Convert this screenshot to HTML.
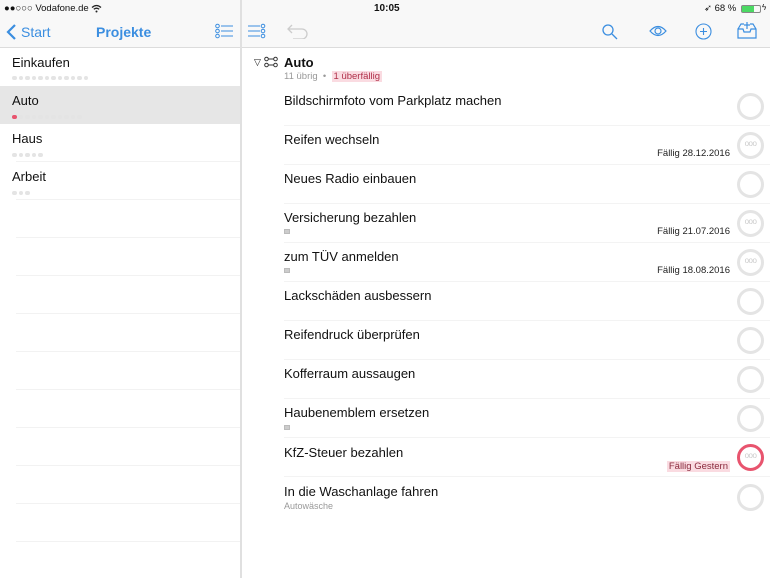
<!DOCTYPE html><html><head><meta charset="utf-8"><style>
*{margin:0;padding:0;box-sizing:border-box}
body{width:770px;height:578px;overflow:hidden;background:#fff;font-family:"Liberation Sans",sans-serif;position:relative;color:#111}
.a{position:absolute}
.top{left:0;top:0;width:770px;height:48px;background:#f8f8f8;border-bottom:1px solid #dcdcdc}
.blue{color:#3b8ee0}
.dots span{display:inline-block;width:4.5px;height:4.5px;border-radius:50%;background:#e4e4e4;margin-right:2px}
.sl{left:16px;width:224px;height:1px;background:#f2f2f2}
.t{left:284px;font-size:13px;color:#111}
.rl{left:284px;width:486px;height:1px;background:#f3f3f3}
.c{left:737px;width:27px;height:27px;border-radius:50%;border:3px solid #e4e4e4}
.c.d::after{content:"ooo";position:absolute;left:0;width:21px;text-align:center;top:5px;font-size:8px;line-height:8px;color:#ccc;letter-spacing:-.5px}
.due{right:40px;font-size:9.5px;color:#222}
.note{left:284px;width:6px;height:5px;background:#ccc;border:1px solid #bbb}
</style></head><body>
<div class="a top"></div>
<div class="a" style="left:4px;top:3px;font-size:9.5px">●●○○○ Vodafone.de</div>
<svg class="a" style="left:91px;top:4px" width="11" height="9" stroke="#222" fill="none" stroke-width="1.3"><path d="M1 3.5Q5.5 -0.5 10 3.5M2.8 5.3Q5.5 3 8.2 5.3"/><circle cx="5.5" cy="7.5" r="1" fill="#222" stroke="none"/></svg>
<div class="a" style="left:374px;top:3px;font-size:10px;font-weight:bold">10:05</div>
<div class="a" style="left:704px;top:3px;font-size:9.5px">➶ 68 %</div>
<div class="a" style="left:741px;top:5px;width:20px;height:8px;border:1px solid #888;border-radius:2px"><div style="width:12px;height:6px;background:#4cd964"></div></div>
<div class="a" style="left:762px;top:3px;font-size:8px">ϟ</div>
<svg class="a" style="left:6px;top:24px" width="12" height="16"><path d="M9 1L2 8l7 7" stroke="#3b8ee0" stroke-width="2.2" fill="none"/></svg>
<div class="a blue" style="left:21px;top:24px;font-size:14px">Start</div>
<div class="a blue" style="left:96px;top:24px;font-size:14px;font-weight:bold">Projekte</div>
<svg class="a" style="left:215px;top:23px" width="18" height="16" stroke="#3b8ee0" fill="none" stroke-width="1"><circle cx="2.5" cy="3" r="1.8"/><circle cx="2.5" cy="8" r="1.8"/><circle cx="2.5" cy="13" r="1.8"/><path d="M6 3h12M6 8h12M6 13h12"/></svg>
<div class="a" style="left:240px;top:0;width:2px;height:578px;background:#e0e0e0"></div>
<svg class="a" style="left:248px;top:23px" width="18" height="16" stroke="#3b8ee0" fill="none" stroke-width="1"><circle cx="15" cy="3" r="1.8"/><circle cx="15" cy="8" r="1.8"/><circle cx="15" cy="13" r="1.8"/><path d="M0 3h12M0 8h12M0 13h12"/></svg>
<svg class="a" style="left:287px;top:23px" width="22" height="16" stroke="#ccc" fill="none" stroke-width="1.3"><path d="M5 2L1 6l4 4M1 6h14a5 5 0 0 1 0 10H6"/></svg>
<svg class="a" style="left:602px;top:24px" width="16" height="16" stroke="#3b8ee0" fill="none" stroke-width="1.3"><circle cx="6" cy="6" r="5"/><path d="M10 10l5 5"/></svg>
<svg class="a" style="left:649px;top:25px" width="18" height="12" stroke="#3b8ee0" fill="none" stroke-width="1.2"><path d="M1 6Q9 -3 17 6Q9 15 1 6z"/><circle cx="9" cy="6" r="3"/></svg>
<svg class="a" style="left:695px;top:23px" width="17" height="17" stroke="#3b8ee0" fill="none" stroke-width="1.1"><circle cx="8.5" cy="8.5" r="7.5"/><path d="M8.5 5v7M5 8.5h7"/></svg>
<svg class="a" style="left:737px;top:21px" width="20" height="18" stroke="#3b8ee0" fill="none" stroke-width="1.2"><path d="M1 8l3-5h3M13 3h3l3 5v9H1V8h5l1 3h6l1-3h5M10 1v7M7 4h6"/></svg>
<div class="a" style="left:0;top:86px;width:240px;height:38px;background:#e6e6e6"></div>
<div class="a" style="left:12px;top:55px;font-size:13px">Einkaufen</div>
<div class="a dots" style="left:12px;top:73px;line-height:5px"><span></span><span></span><span></span><span></span><span></span><span></span><span></span><span></span><span></span><span></span><span></span><span></span></div>
<div class="a" style="left:12px;top:93px;font-size:13px">Auto</div>
<div class="a dots" style="left:12px;top:112px;line-height:5px"><span style="background:#e8546e"></span><span></span><span></span><span></span><span></span><span></span><span></span><span></span><span></span><span></span><span></span></div>
<div class="a" style="left:12px;top:131px;font-size:13px">Haus</div>
<div class="a dots" style="left:12px;top:150px;line-height:5px"><span></span><span></span><span></span><span></span><span></span></div>
<div class="a" style="left:12px;top:169px;font-size:13px">Arbeit</div>
<div class="a dots" style="left:12px;top:188px;line-height:5px"><span></span><span></span><span></span></div>
<div class="a sl" style="top:161px"></div><div class="a sl" style="top:199px"></div><div class="a sl" style="top:237px"></div><div class="a sl" style="top:275px"></div><div class="a sl" style="top:313px"></div><div class="a sl" style="top:351px"></div><div class="a sl" style="top:389px"></div><div class="a sl" style="top:427px"></div><div class="a sl" style="top:465px"></div><div class="a sl" style="top:503px"></div><div class="a sl" style="top:541px"></div>
<div class="a" style="left:254px;top:57px;font-size:9px">▽</div>
<svg class="a" style="left:264px;top:56px" width="14" height="12" stroke="#333" fill="none" stroke-width="1"><circle cx="2.5" cy="3" r="1.8"/><circle cx="11.5" cy="3" r="1.8"/><circle cx="2.5" cy="9" r="1.8"/><circle cx="11.5" cy="9" r="1.8"/><path d="M4.5 3h5M4.5 9h5"/></svg>
<div class="a" style="left:284px;top:55px;font-size:13px;font-weight:bold">Auto</div>
<div class="a" style="left:284px;top:71px;font-size:9.5px;color:#999">11 übrig &nbsp;•&nbsp; <span style="background:#fadbe1;color:#b0304a;padding:0 2px">1 überfällig</span></div>
<div class="a t" style="top:93px">Bildschirmfoto vom Parkplatz machen</div><div class="a c" style="top:93px"></div><div class="a rl" style="top:125px"></div>
<div class="a t" style="top:132px">Reifen wechseln</div><div class="a due" style="top:148px">Fällig 28.12.2016</div><div class="a c d" style="top:132px"></div><div class="a rl" style="top:164px"></div>
<div class="a t" style="top:171px">Neues Radio einbauen</div><div class="a c" style="top:171px"></div><div class="a rl" style="top:203px"></div>
<div class="a t" style="top:210px">Versicherung bezahlen</div><div class="a note" style="top:229px"></div><div class="a due" style="top:226px">Fällig 21.07.2016</div><div class="a c d" style="top:210px"></div><div class="a rl" style="top:242px"></div>
<div class="a t" style="top:249px">zum TÜV anmelden</div><div class="a note" style="top:268px"></div><div class="a due" style="top:265px">Fällig 18.08.2016</div><div class="a c d" style="top:249px"></div><div class="a rl" style="top:281px"></div>
<div class="a t" style="top:288px">Lackschäden ausbessern</div><div class="a c" style="top:288px"></div><div class="a rl" style="top:320px"></div>
<div class="a t" style="top:327px">Reifendruck überprüfen</div><div class="a c" style="top:327px"></div><div class="a rl" style="top:359px"></div>
<div class="a t" style="top:366px">Kofferraum aussaugen</div><div class="a c" style="top:366px"></div><div class="a rl" style="top:398px"></div>
<div class="a t" style="top:405px">Haubenemblem ersetzen</div><div class="a note" style="top:425px"></div><div class="a c" style="top:405px"></div><div class="a rl" style="top:437px"></div>
<div class="a t" style="top:445px">KfZ-Steuer bezahlen</div><div class="a due" style="top:461px;background:#fadbe1;color:#8a2a3d;padding:0 2px">Fällig Gestern</div><div class="a c d" style="top:444px;border-color:#e8546e"></div><div class="a rl" style="top:476px"></div>
<div class="a t" style="top:484px">In die Waschanlage fahren</div><div class="a" style="left:284px;top:501px;font-size:9px;color:#999">Autowäsche</div><div class="a c" style="top:484px"></div>
</body></html>
